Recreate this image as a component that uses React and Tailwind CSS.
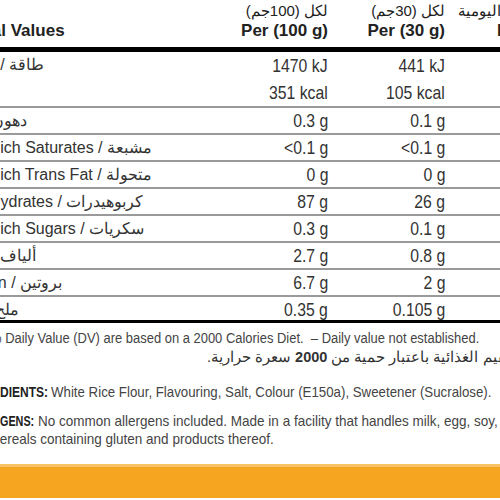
import React from "react";

const rows = [
  { en: "Energy", ar: "طاقة", off: "ml-[-7px]", v1: ["1470 kJ", "351 kcal"], v2: ["441 kJ", "105 kcal"], v3: ["", ""] },
  { en: "Fat", ar: "دهون", off: "ml-[4px]", v1: ["0.3 g"], v2: ["0.1 g"], v3: ["–"] },
  { en: "of which Saturates", ar: "مشبعة", off: "ml-[10px]", v1: ["<0.1 g"], v2: ["<0.1 g"], v3: ["–"] },
  { en: "of which Trans Fat", ar: "متحولة", off: "ml-[10px]", v1: ["0 g"], v2: ["0 g"], v3: ["–"] },
  { en: "Carbohydrates", ar: "كربوهيدرات", off: "ml-[-4px]", v1: ["87 g"], v2: ["26 g"], v3: ["–"] },
  { en: "of which Sugars", ar: "سكريات", off: "ml-[10px]", v1: ["0.3 g"], v2: ["0.1 g"], v3: ["–"] },
  { en: "Fibre", ar: "ألياف", off: "ml-[-2px]", v1: ["2.7 g"], v2: ["0.8 g"], v3: ["–"] },
  { en: "Protein", ar: "بروتين", off: "ml-[4px]", v1: ["6.7 g"], v2: ["2 g"], v3: ["–"] },
  { en: "Salt", ar: "ملح", off: "ml-[2px]", v1: ["0.35 g"], v2: ["0.105 g"], v3: ["–"] },
];

function ValueCell({ vals }) {
  return (
    <div className="flex flex-col items-end text-[19px] text-[#333]">
      {vals.map((v, i) => (
        <div
          key={i}
          className={`origin-right scale-x-[0.83] whitespace-nowrap ${
            vals.length > 1 ? "h-[27px] leading-[27px]" : "leading-[25px]"
          }`}
        >
          {v}
        </div>
      ))}
    </div>
  );
}

export default function App() {
  return (
    <div className="w-[500px] h-[500px] overflow-hidden bg-white font-['Liberation_Sans',sans-serif]">
      <div className="ml-[-48px] w-[640px]">
        {/* Header */}
        <div className="grid grid-cols-[259px_117px_117px_147px] h-[52px] border-b-[5px] border-black text-[#222]">
          <div className="flex flex-col pt-[1px]">
            <div className="h-[20px]" />
            <div className="ml-[-31px] text-[17px] font-bold leading-[20px] whitespace-nowrap">Nutritional Values</div>
          </div>
          <div className="flex flex-col items-end pt-[1px]">
            <div className="text-[15px] leading-[20px]" dir="rtl">لكل (100جم)</div>
            <div className="text-[17px] font-bold leading-[20px] whitespace-nowrap">Per (100 g)</div>
          </div>
          <div className="flex flex-col items-end pt-[1px]">
            <div className="text-[15px] leading-[20px]" dir="rtl">لكل (30جم)</div>
            <div className="text-[17px] font-bold leading-[20px] whitespace-nowrap">Per (30 g)</div>
          </div>
          <div className="flex flex-col items-start pt-[1px] pl-[13px]">
            <div className="text-[15px] leading-[20px] whitespace-nowrap" dir="rtl">القيمة اليومية</div>
            <div className="pl-[39px] text-[17px] font-bold leading-[20px] whitespace-nowrap">DV%</div>
          </div>
        </div>

        {/* Rows */}
        {rows.map((r, i) => {
          const last = i === rows.length - 1;
          return (
            <div
              key={r.en}
              className={`grid grid-cols-[259px_117px_117px_147px] ${
                last ? "h-[26px] border-b-[3px] border-black" : "border-b-2 border-[#9a9a9a]"
              }`}
            >
              <div className={`${r.off} text-[16px] text-[#333] leading-[25px] whitespace-nowrap`}>
                {r.en} / <span>{r.ar}</span>
              </div>
              <ValueCell vals={r.v1} />
              <ValueCell vals={r.v2} />
              <ValueCell vals={r.v3} />
            </div>
          );
        })}

        {/* Footnotes */}
        <div className="text-[#444]">
          <div className="pt-[6px] pl-[33px] text-[14px] leading-[18px] whitespace-nowrap">
            <span className="inline-block origin-left scale-x-[0.925]">
              *% Daily Value (DV) are based on a 2000 Calories Diet. &nbsp;– Daily value not established.
            </span>
          </div>
          <div className="pl-[255px] text-[14.5px] leading-[20px] whitespace-nowrap text-[#333]">
            <span dir="rtl">النسبة المئوية من القيم الغذائية باعتبار حمية من <b>2000</b> سعرة حرارية.</span>
          </div>
          <div className="mt-[16px] pl-[10px] flex text-[15px] leading-[18px] whitespace-nowrap">
            <span className="w-[89px] shrink-0">
              <b className="inline-block origin-left scale-x-[0.8] text-[#222]">INGREDIENTS:</b>
            </span>
            <span className="inline-block origin-left scale-x-[0.885]">
              White Rice Flour, Flavouring, Salt, Colour (E150a), Sweetener (Sucralose).
            </span>
          </div>
          <div className="mt-[11px] pl-[12px] flex text-[15px] leading-[18px] whitespace-nowrap">
            <span className="w-[74px] shrink-0">
              <b className="inline-block origin-left scale-x-[0.72] text-[#222]">ALLERGENS:</b>
            </span>
            <span className="inline-block origin-left scale-x-[0.9]">
              No common allergens included. Made in a facility that handles milk, egg, soy, wheat,
            </span>
          </div>
          <div className="pl-[41px] text-[15px] leading-[18px] whitespace-nowrap">
            <span className="inline-block origin-left scale-x-[0.9]">
              cereals containing gluten and products thereof.
            </span>
          </div>
        </div>

        {/* Orange band */}
        <div className="mt-[16px] h-[34px] bg-[#f5a51f] border-t-[3px] border-[#f8c266]" />
      </div>
    </div>
  );
}
